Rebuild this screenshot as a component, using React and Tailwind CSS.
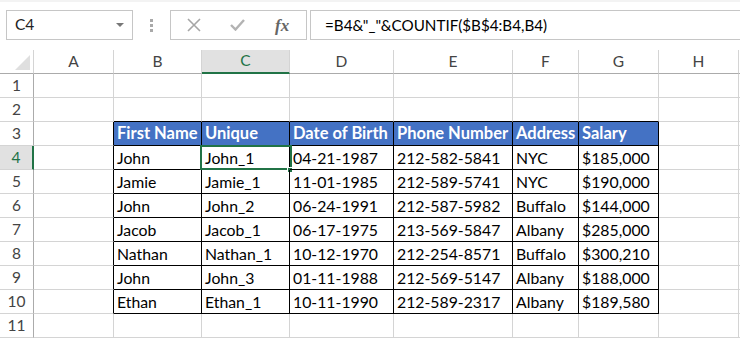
import React from "react";

const COLS = ["A", "B", "C", "D", "E", "F", "G", "H"];
const WIDTHS = ["w-[80px]", "w-[88px]", "w-[88px]", "w-[104px]", "w-[119px]", "w-[66px]", "w-[80px]", "w-[80px]"];

const HEAD = ["First Name", "Unique", "Date of Birth", "Phone Number", "Address", "Salary"];
const DATA = [
  ["John", "John_1", "04-21-1987", "212-582-5841", "NYC", "$185,000"],
  ["Jamie", "Jamie_1", "11-01-1985", "212-589-5741", "NYC", "$190,000"],
  ["John", "John_2", "06-24-1991", "212-587-5982", "Buffalo", "$144,000"],
  ["Jacob", "Jacob_1", "06-17-1975", "213-569-5847", "Albany", "$285,000"],
  ["Nathan", "Nathan_1", "10-12-1970", "212-254-8571", "Buffalo", "$300,210"],
  ["John", "John_3", "01-11-1988", "212-569-5147", "Albany", "$188,000"],
  ["Ethan", "Ethan_1", "10-11-1990", "212-589-2317", "Albany", "$189,580"],
];

function cellText(r, c) {
  if (c < 1 || c > 6) return "";
  if (r === 3) return HEAD[c - 1];
  if (r >= 4 && r <= 10) return DATA[r - 4][c - 1];
  return "";
}

function Cell({ r, c }) {
  const rightBlack = c <= 6 && r >= 3 && r <= 10;
  const bottomBlack = c >= 1 && c <= 6 && r >= 2 && r <= 10;
  const isHead = r === 3 && c >= 1 && c <= 6;
  const text = cellText(r, c);
  return (
    <div
      className={`relative shrink-0 h-full border-r border-b flex items-end pl-[3px] pb-[1px] whitespace-nowrap overflow-visible ${WIDTHS[c]} ${
        rightBlack ? "border-r-black" : "border-r-[#d4d4d4]"
      } ${bottomBlack ? "border-b-black" : "border-b-[#d4d4d4]"} ${
        isHead ? "bg-[#4472c4] text-white font-bold text-[16.5px]" : "text-black text-[15.8px]"
      }`}
    >
      <span className="leading-[21px]">{text}</span>
      {r === 4 && c === 2 && (
        <>
          <div className="absolute -left-[2px] -top-[1px] w-[92px] h-[25px] border-2 border-[#217346] pointer-events-none" />
          <div className="absolute left-[85px] top-[21px] w-[6px] h-[6px] bg-[#217346] border border-white" />
        </>
      )}
    </div>
  );
}

function Toolbar() {
  return (
    <div className="h-[50px] flex items-start pt-[8px] bg-white">
      <div className="ml-[6px] w-[127px] h-[30px] border border-[#c6c6c6] flex items-center justify-between pl-[8px] pr-[8px] text-[15.5px] text-[#222]">
        <span>C4</span>
        <svg width="8" height="5" viewBox="0 0 8 5">
          <path d="M0 0 L8 0 L4 4 Z" fill="#777" />
        </svg>
      </div>
      <div className="ml-[17px] mt-[9px] flex flex-col gap-[2px]">
        <div className="w-[3px] h-[3px] bg-[#a9a9a9]" />
        <div className="w-[3px] h-[3px] bg-[#a9a9a9]" />
        <div className="w-[3px] h-[3px] bg-[#a9a9a9]" />
      </div>
      <div className="ml-[17px] w-[137px] h-[30px] border border-[#c6c6c6] flex items-center">
        <svg className="ml-[16px]" width="14" height="14" viewBox="0 0 14 14">
          <path d="M1 1 L13 13 M13 1 L1 13" stroke="#a6a6a6" strokeWidth="1.6" />
        </svg>
        <svg className="ml-[29px]" width="15" height="12" viewBox="0 0 15 12">
          <path d="M1 6 L5.5 10.5 L14 1" stroke="#b3b3b3" strokeWidth="2.4" fill="none" />
        </svg>
        <span className="ml-[30px] italic font-bold text-[17px] text-[#666] leading-none" style={{ fontFamily: '"Liberation Serif", serif' }}>
          fx
        </span>
      </div>
      <div className="ml-[3px] flex-1 h-[30px] border border-r-0 border-[#c6c6c6] flex items-center pl-[14px] text-[15.2px] text-black whitespace-nowrap">
        =B4&amp;"_"&amp;COUNTIF($B$4:B4,B4)
      </div>
    </div>
  );
}

export default function App() {
  const rows = Array.from({ length: 11 }, (_, i) => i + 1);
  return (
    <div className="w-[740px] h-[338px] overflow-hidden bg-white text-[15.5px]" style={{ fontFamily: "Lato, 'Liberation Sans', sans-serif" }}>
      <div className="h-[2px] bg-[#f3f3f3]" />
      <Toolbar />
      {/* column headers */}
      <div className="flex h-[24px] -mt-[2px]">
        <div className="w-[34px] shrink-0 h-full border-r border-b border-r-[#d4d4d4] border-b-[#ababab] flex items-end justify-end pr-[3px] pb-[3px]">
          <svg width="15" height="15" viewBox="0 0 15 15">
            <path d="M15 0 L15 15 L0 15 Z" fill="#dfdfdf" />
          </svg>
        </div>
        {COLS.map((col, c) => (
          <div
            key={col}
            className={`shrink-0 h-full border-r border-r-[#d4d4d4] flex items-center justify-center ${WIDTHS[c]} ${
              c === 2 ? "bg-[#e1e1e1] text-[#217346] border-b-2 border-b-[#217346]" : "text-[#444] border-b border-b-[#ababab]"
            }`}
          >
            {col}
          </div>
        ))}
        <div className="flex-1 border-b border-b-[#ababab]" />
      </div>
      {rows.map((r) => (
        <div key={r} className="flex h-[24px]">
          <div
            className={`w-[34px] shrink-0 h-full border-b border-b-[#d4d4d4] flex items-center justify-center ${
              r === 4 ? "bg-[#e1e1e1] text-[#217346] border-r-2 border-r-[#217346]" : "text-[#444] border-r border-r-[#ababab]"
            }`}
          >
            {r}
          </div>
          {COLS.map((col, c) => (
            <Cell key={col} r={r} c={c} />
          ))}
          <div className="flex-1 border-b border-b-[#d4d4d4]" />
        </div>
      ))}
    </div>
  );
}
